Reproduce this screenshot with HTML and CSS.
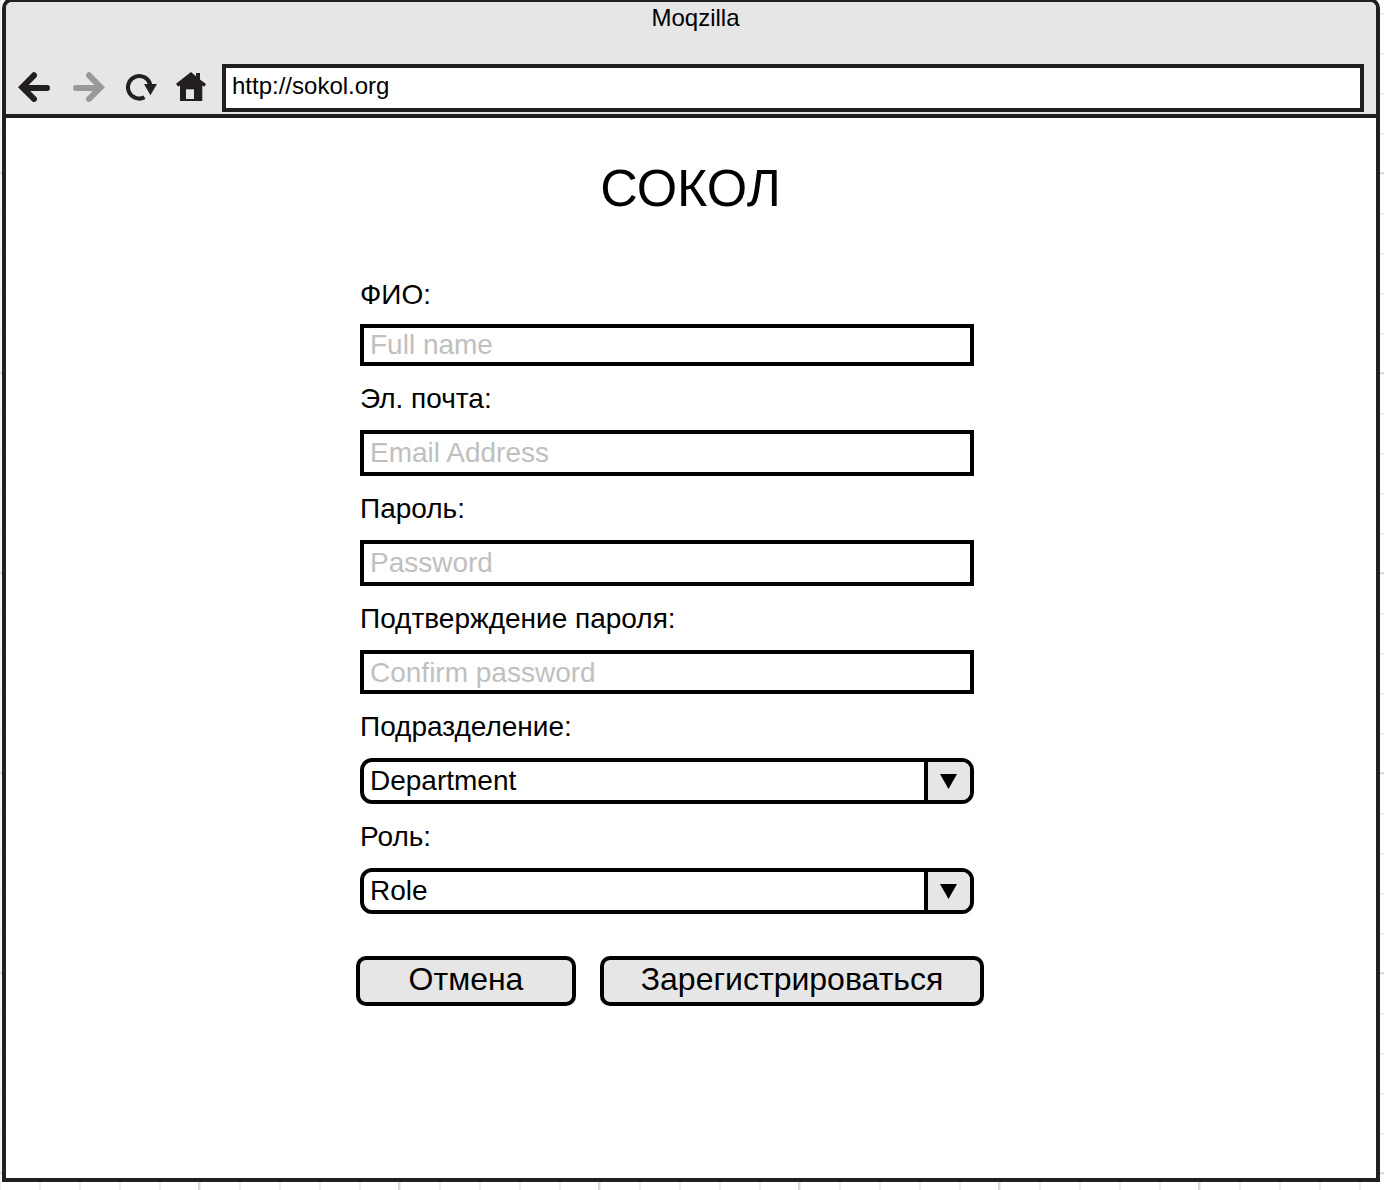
FILE: index.html
```
<!DOCTYPE html>
<html lang="ru">
<head>
<meta charset="utf-8">
<title>Moqzilla</title>
<link rel="stylesheet" href="styles.css">
</head>
<body>
<div class="canvas">
  <div class="window">
    <header class="chrome">
      <div class="window-title">Moqzilla</div>
      <div class="toolbar">
        <svg class="icon back" width="32" height="30" viewBox="0 0 32 30" fill="none" stroke="#231f20" stroke-width="6" stroke-linecap="round"><path d="M6 16H29M16 3.300L4.240 15.200L16 27"/></svg>
        <svg class="icon forward" width="32" height="30" viewBox="0 0 32 30" fill="none" stroke="#999" stroke-width="6" stroke-linecap="round"><path d="M3 16H26M16 3.300L27.760 15.200L16 27"/></svg>
        <svg class="icon reload" width="32" height="28" viewBox="0 0 32 28"><path d="M19.500 24.300A11.300 11.300 0 1 1 25.200 11.400" fill="none" stroke="#231f20" stroke-width="4"/><path d="M19 11H32L25.400 22.300Z" fill="#231f20"/></svg>
        <svg class="icon home" width="30" height="30" viewBox="0 0 30 30"><path d="M15 0L20 4.300V1H24V7.500L30 12L28.300 14.700L26.300 13.500V29H4V13.500L2.200 14.700L0 11.800Z" fill="#231f20"/><path d="M10 17.300H18V27H10Z" fill="#e6e6e6"/></svg>
        <div class="address">http://sokol.org</div>
      </div>
    </header>
    <main class="page">
      <h1 class="brand">СОКОЛ</h1>
      <form class="form">
        <label class="label first" for="name">ФИО:</label>
        <input class="input short" id="name" type="text" placeholder="Full name">
        <label class="label" for="email">Эл. почта:</label>
        <input class="input" id="email" type="text" placeholder="Email Address">
        <label class="label" for="pass">Пароль:</label>
        <input class="input" id="pass" type="text" placeholder="Password">
        <label class="label" for="confirm">Подтверждение пароля:</label>
        <input class="input medium" id="confirm" type="text" placeholder="Confirm password">
        <div class="label">Подразделение:</div>
        <div class="select">
          <span class="value">Department</span>
          <span class="arrow"><svg width="17" height="15" viewBox="0 0 17 15"><path d="M0 0H17L8.500 15Z"/></svg></span>
        </div>
        <div class="label">Роль:</div>
        <div class="select">
          <span class="value">Role</span>
          <span class="arrow"><svg width="17" height="15" viewBox="0 0 17 15"><path d="M0 0H17L8.500 15Z"/></svg></span>
        </div>
        <div class="actions">
          <button class="button cancel" type="button">Отмена</button>
          <button class="button register" type="button">Зарегистрироваться</button>
        </div>
      </form>
    </main>
  </div>
</div>
</body>
</html>
```
FILE: styles.css
```
* {
  box-sizing: border-box;
}

body {
  margin: 0;
  font-family: "Liberation Sans", Arial, sans-serif;
  color: #000;
}

/* drawing-board grid: a darker line every fifth step */
.canvas {
  height: 1190px;
  padding: 0 4px 0 2px;
  overflow: hidden;
  background-color: #fff;
  background-image:
    linear-gradient(#dadada 2px, transparent 2px),
    linear-gradient(90deg, #dadada 2px, transparent 2px),
    linear-gradient(#ececec 2px, transparent 2px),
    linear-gradient(90deg, #ececec 2px, transparent 2px);
  background-size: 200px 200px, 200px 200px, 40px 40px, 40px 40px;
  background-position: 0 172px, 198px 0, 0 13px, 39px 0;
}

.window {
  height: 1184px;
  margin-top: -2px;
  border: 4px solid #231f20;
  border-radius: 10px 10px 0 0;
  background: #fff;
}

.chrome {
  height: 116px;
  border-bottom: 4px solid #231f20;
  border-radius: 6px 6px 0 0;
  background: #e6e6e6;
}

.window-title {
  height: 62px;
  padding: 2px 0 0 9px;
  font-size: 24px;
  line-height: 28px;
  text-align: center;
}

.toolbar {
  display: flex;
  align-items: flex-start;
  padding: 0 12px;
}

.icon {
  flex: none;
  display: block;
  margin-top: 8px;
}

.forward {
  margin-left: 23px;
}

.reload {
  margin: 9px 0 0 20px;
}

.home {
  margin-left: 19px;
}

.address {
  flex: 1;
  height: 48px;
  margin-left: 16px;
  padding: 4px 6px;
  border: 4px solid #231f20;
  background: #fff;
  font-size: 24px;
  line-height: 28px;
}

.brand {
  margin: 40px 0 0;
  padding-right: 1px;
  font-size: 52px;
  font-weight: 400;
  line-height: 60px;
  text-align: center;
}

.form {
  display: flex;
  flex-direction: column;
  gap: 16px;
  width: 614px;
  margin: 60px 0 0 354px;
}

.label {
  height: 32px;
  font-size: 28px;
  line-height: 34px;
}

.first {
  margin-bottom: -2px;
}

.input {
  width: 100%;
  height: 46px;
  margin: 0;
  padding: 3px 6px;
  border: 4px solid #000;
  border-radius: 0;
  background: #fff;
  font: 28px/32px "Liberation Sans", Arial, sans-serif;
  outline: none;
}

.input::placeholder {
  color: #c0c0c0;
  opacity: 1;
}

.short {
  height: 42px;
  padding: 1px 6px;
}

.medium {
  height: 44px;
  padding-bottom: 1px;
}

.select {
  display: flex;
  height: 46px;
  border: 4px solid #000;
  border-radius: 12px;
  overflow: hidden;
}

.value {
  flex: 1;
  padding: 3px 6px;
  font-size: 28px;
  line-height: 32px;
}

.arrow {
  width: 46px;
  padding: 12px 0 0 12px;
  border-left: 4px solid #000;
  background: #e6e6e6;
}

.arrow svg {
  display: block;
}

.actions {
  display: flex;
  gap: 24px;
  width: 628px;
  margin: 26px 0 0 -4px;
}

.button {
  height: 50px;
  padding: 0 0 4px;
  border: 4px solid #000;
  border-radius: 10px;
  background: #e6e6e6;
  color: #000;
  font: 32px/38px "Liberation Sans", Arial, sans-serif;
}

.cancel {
  width: 220px;
}

.register {
  width: 384px;
}
```
